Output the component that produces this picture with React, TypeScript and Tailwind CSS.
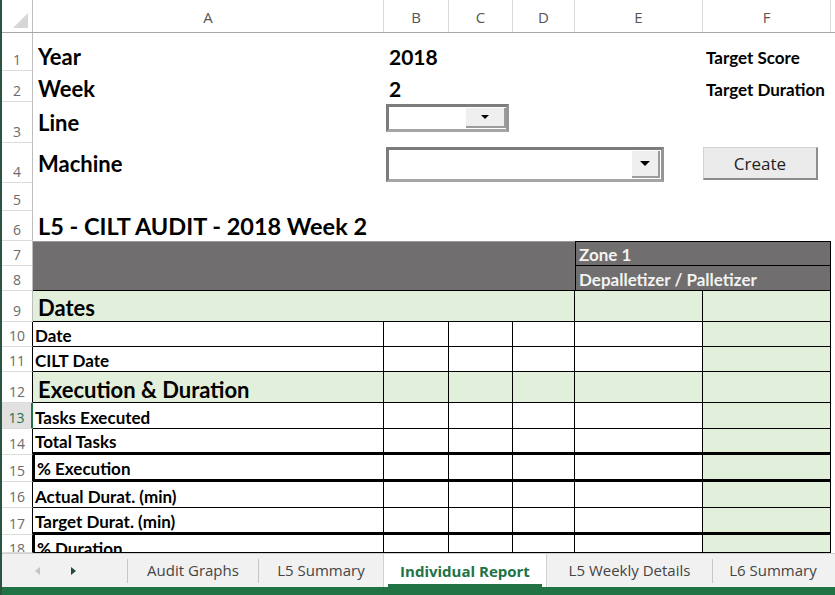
import React from 'react';

const COLS = 'grid grid-cols-[31px_351px_65px_64px_62px_128px_128px_4px]';
const CAL = 'font-[family-name:Lato,sans-serif]';
const UI = "font-[family-name:'Open_Sans',sans-serif]";

function RowHdr({ n, sel, dark, top }: { n: number; sel?: boolean; dark?: boolean; top?: boolean }) {
  let cls = 'text-[#6b6b6b] border-r border-r-[#bdbdbd]';
  if (dark) cls = 'text-[#6b6b6b] border-r border-r-black';
  if (sel) cls = 'bg-[#e1e1e1] text-[#217346] border-r-2 border-r-[#217346]';
  return (
    <div
      className={`flex ${top ? 'items-start pt-[7px]' : 'items-end pb-[3px]'} justify-center overflow-hidden border-b border-b-[#dcdcdc] text-[14px] leading-none ${UI} ${cls}`}
    >
      {n}
    </div>
  );
}

function DownTri({ big }: { big?: boolean }) {
  return big ? (
    <div className="w-0 h-0 border-x-[5px] border-x-transparent border-t-[5px] border-t-black" />
  ) : (
    <div className="w-0 h-0 border-x-[4px] border-x-transparent border-t-[4px] border-t-black" />
  );
}

type Row = { n: number; label: string; h: string; sel?: boolean; thickB?: boolean; thickL?: boolean; clip?: boolean };

const rows: Row[] = [
  { n: 13, label: 'Tasks Executed', h: 'h-[26px]', sel: true },
  { n: 14, label: 'Total Tasks', h: 'h-[26px]', thickB: true },
  { n: 15, label: '% Execution', h: 'h-[27px]', thickB: true, thickL: true },
  { n: 16, label: 'Actual Durat. (min)', h: 'h-[26px]' },
  { n: 17, label: 'Target Durat. (min)', h: 'h-[27px]', thickB: true },
  { n: 18, label: '% Duration', h: 'h-[18px]', thickL: true, clip: true },
];

function TableRow({ r }: { r: Row }) {
  const b = r.thickB ? 'border-r border-b-[3px] border-black' : 'border-r border-b border-black';
  return (
    <div className={`${COLS} ${r.h}`}>
      <RowHdr n={r.n} sel={r.sel} dark top={r.clip} />
      <div
        className={`${b} ${r.thickL ? 'border-l-2' : ''} bg-white flex ${
          r.clip ? 'items-start pt-[4px]' : 'items-end'
        } pl-[2px] overflow-hidden text-[17px] leading-[20px] font-bold text-black whitespace-nowrap ${CAL}`}
      >
        {r.label}
      </div>
      <div className={`${b} bg-white`} />
      <div className={`${b} bg-white`} />
      <div className={`${b} bg-white`} />
      <div className={`${b} bg-white`} />
      <div className={`${b} bg-[#e2efda]`} />
      <div />
    </div>
  );
}

function Tab({ label, w, active, sep }: { label: string; w: string; active?: boolean; sep?: boolean }) {
  return (
    <div className={`flex items-center ${w}`}>
      <div
        className={`flex-1 h-full flex items-center justify-center ${
          active
            ? 'bg-white border-x border-[#d0d0d0] -mt-px text-[#217346] font-bold'
            : 'text-[#444]'
        }`}
      >
        <span className={active ? 'border-b-[3px] border-[#217346] pt-[3px] pb-[2px] px-[12px] mt-[4px]' : ''}>{label}</span>
      </div>
      {sep && <div className="w-px h-[24px] bg-[#c6c6c6]" />}
    </div>
  );
}

export default function App() {
  return (
    <div className={`w-[835px] h-[595px] overflow-hidden bg-white border-l-2 border-[#2c5440] flex flex-col ${CAL}`}>
      {/* column headers */}
      <div className={`${COLS} h-[33px] border-b border-[#a8a8a8] text-[15px] text-[#555] ${UI}`}>
        <div className="relative border-r border-[#bdbdbd]">
          <svg className="absolute left-0 top-0" width="31" height="32">
            <polygon points="26,13 26,28 11,28" fill="#d6d6d6" />
          </svg>
        </div>
        {['A', 'B', 'C', 'D', 'E', 'F'].map((c) => (
          <div key={c} className="flex items-center justify-center pt-[3px] border-r border-[#dadada]">
            {c}
          </div>
        ))}
        <div />
      </div>

      {/* rows 1-2 */}
      <div className={`${COLS} h-[38px]`}>
        <RowHdr n={1} />
        <div className="flex items-end pb-px pl-[5px] text-[22px] leading-[26px] font-bold">Year</div>
        <div className="col-span-4 flex items-end pb-px pl-[5px] text-[21px] leading-[26px] font-bold">2018</div>
        <div className="col-span-2 flex items-end pb-[3px] pl-[3px] text-[17px] leading-[20px] font-bold whitespace-nowrap">Target Score</div>
      </div>
      <div className={`${COLS} h-[31px]`}>
        <RowHdr n={2} />
        <div className="flex items-end pl-[5px] text-[22px] leading-[26px] font-bold">Week</div>
        <div className="col-span-4 flex items-end pl-[5px] text-[21px] leading-[26px] font-bold">2</div>
        <div className="col-span-2 flex items-end pb-[2px] pl-[3px] text-[17px] leading-[20px] font-bold whitespace-nowrap">Target Duration</div>
      </div>

      {/* row 3 */}
      <div className={`${COLS} h-[41px]`}>
        <RowHdr n={3} />
        <div className="flex items-end pb-[7px] pl-[5px] text-[22px] leading-[26px] font-bold">Line</div>
        <div className="col-span-6">
          <div className="ml-[2px] mt-[2px] w-[123px] h-[28px] flex bg-white border-[3px] border-t-[#7c7c7c] border-l-[#7c7c7c] border-r-[#969696] border-b-[#a5a5a5]">
            <div className="flex-1" />
            <div className="w-[40px] my-px bg-[#efefef] border-b-2 border-r-2 border-[#9c9c9c] flex items-center justify-center">
              <DownTri />
            </div>
          </div>
        </div>
      </div>

      {/* row 4 */}
      <div className={`${COLS} h-[40px]`}>
        <RowHdr n={4} />
        <div className="flex items-end pb-[6px] pl-[5px] text-[22px] leading-[26px] font-bold">Machine</div>
        <div className="col-span-4">
          <div className="ml-[2px] mt-[4px] w-[278px] h-[35px] flex bg-white border-[3px] border-t-[#7c7c7c] border-l-[#7c7c7c] border-r-[#969696] border-b-[#a5a5a5]">
            <div className="flex-1" />
            <div className="w-[28px] my-px mr-px bg-[#efefef] border-b-2 border-r-2 border-[#9c9c9c] flex items-center justify-center">
              <DownTri big />
            </div>
          </div>
        </div>
        <div className="col-span-2">
          <div className={`mt-[4px] w-[115px] h-[33px] bg-[#ebebeb] border border-[#d2d2d2] border-r-2 border-b-2 border-r-[#8d8d8d] border-b-[#8d8d8d] flex items-center justify-center pt-px text-[17px] text-[#222] ${UI}`}>
            Create
          </div>
        </div>
      </div>

      {/* row 5 */}
      <div className={`${COLS} h-[28px]`}>
        <RowHdr n={5} />
      </div>

      {/* row 6 */}
      <div className={`${COLS} h-[30px]`}>
        <RowHdr n={6} />
        <div className="col-span-7 flex items-end pb-px pl-[5px] text-[23.5px] leading-[28px] font-bold whitespace-nowrap">
          L5 - CILT AUDIT - 2018 Week 2
        </div>
      </div>

      {/* rows 7-8 */}
      <div className={`${COLS} h-[50px]`}>
        <div className="flex flex-col">
          <div className="h-[25px] grid">
            <RowHdr n={7} />
          </div>
          <div className="h-[25px] grid">
            <RowHdr n={8} />
          </div>
        </div>
        <div className="col-span-4 bg-[#706e6e] border-t border-t-[#9a9a9a] border-b border-b-black" />
        <div className="col-span-2 flex flex-col bg-[#706e6e] text-[17px] leading-[20px] font-bold text-[#f2f2f2]">
          <div className="h-[25px] border border-black flex items-end pl-[3px]">Zone 1</div>
          <div className="h-[25px] border-x border-b border-black flex items-end pl-[3px] whitespace-nowrap">
            Depalletizer / Palletizer
          </div>
        </div>
        <div />
      </div>

      {/* row 9 */}
      <div className={`${COLS} h-[31px]`}>
        <RowHdr n={9} />
        <div className="col-span-4 bg-[#e2efda] border-r border-b border-black flex items-end pb-px pl-[5px] text-[22px] leading-[24px] font-bold">
          Dates
        </div>
        <div className="bg-[#e2efda] border-r border-b border-black" />
        <div className="bg-[#e2efda] border-r border-b border-black" />
        <div />
      </div>

      {/* rows 10-11 */}
      {[
        { n: 10, label: 'Date' },
        { n: 11, label: 'CILT Date' },
      ].map((r) => (
        <div key={r.n} className={`${COLS} h-[25px]`}>
          <RowHdr n={r.n} dark />
          <div className="bg-white border-r border-b border-black flex items-end pl-[2px] text-[17px] leading-[20px] font-bold">
            {r.label}
          </div>
          <div className="bg-white border-r border-b border-black" />
          <div className="bg-white border-r border-b border-black" />
          <div className="bg-white border-r border-b border-black" />
          <div className="bg-white border-r border-b border-black" />
          <div className="bg-[#e2efda] border-r border-b border-black" />
          <div />
        </div>
      ))}

      {/* row 12 */}
      <div className={`${COLS} h-[31px]`}>
        <RowHdr n={12} dark />
        <div className="bg-[#e2efda] border-r border-b border-black flex items-end pl-[5px] text-[22px] leading-[24px] font-bold whitespace-nowrap">
          Execution &amp; Duration
        </div>
        <div className="bg-[#e2efda] border-r border-b border-black" />
        <div className="bg-[#e2efda] border-r border-b border-black" />
        <div className="bg-[#e2efda] border-r border-b border-black" />
        <div className="bg-[#e2efda] border-r border-b border-black" />
        <div className="bg-[#e2efda] border-r border-b border-black" />
        <div />
      </div>

      {rows.map((r) => (
        <TableRow key={r.n} r={r} />
      ))}

      {/* sheet tabs */}
      <div className={`h-[34px] flex bg-[#f1f1f1] border-t border-[#d0d0d0] text-[15px] ${UI}`}>
        <div className="w-[125px] flex items-center">
          <div className="ml-[33px] w-0 h-0 border-y-[4px] border-y-transparent border-r-[5px] border-r-[#c4c4c4]" />
          <div className="ml-[31px] w-0 h-0 border-y-[4px] border-y-transparent border-l-[5px] border-l-[#26483a]" />
        </div>
        <div className="w-px h-[24px] bg-[#c6c6c6] self-center" />
        <Tab label="Audit Graphs" w="w-[131px]" sep />
        <Tab label="L5 Summary" w="w-[124px]" />
        <Tab label="Individual Report" w="w-[164px]" active />
        <Tab label="L5 Weekly Details" w="w-[166px]" sep />
        <Tab label="L6 Summary" w="w-[120px]" />
      </div>
      <div className="h-[8px] bg-[#217346]" />
    </div>
  );
}
